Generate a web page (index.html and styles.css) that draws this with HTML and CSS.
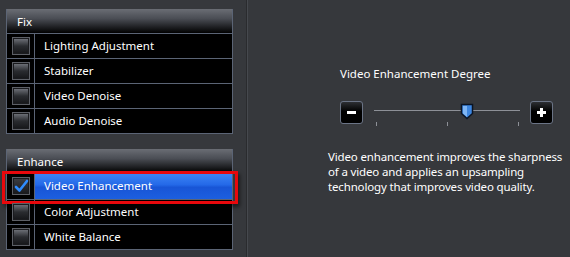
FILE: index.html
```html
<!DOCTYPE html>
<html lang="en">
<head>
    <meta charset="UTF-8">
    <title>Video Enhancement</title>
    <link rel="stylesheet" href="styles.css">
</head>
<body>
<div class="app">
    <!-- Danh sach hieu chinh -->
    <div class="side">
        <div class="panel">
            <div class="panel-head">Fix</div>
            <div class="row"><span class="cell"><span class="box"></span></span><span class="label">Lighting Adjustment</span></div>
            <div class="row"><span class="cell"><span class="box"></span></span><span class="label">Stabilizer</span></div>
            <div class="row"><span class="cell"><span class="box"></span></span><span class="label">Video Denoise</span></div>
            <div class="row"><span class="cell"><span class="box"></span></span><span class="label">Audio Denoise</span></div>
        </div>

        <div class="panel">
            <div class="panel-head">Enhance</div>
            <div class="row selected">
                <span class="cell">
                    <span class="box checked">
                        <svg width="16" height="16" viewBox="0 0 16 16">
                            <path d="M3 9 L6.5 12.5 L14 3" fill="none" stroke="#2f8cff" stroke-width="2.6" stroke-linecap="round" stroke-linejoin="round"/>
                        </svg>
                    </span>
                </span>
                <span class="label">Video Enhancement</span>
            </div>
            <div class="row"><span class="cell"><span class="box"></span></span><span class="label">Color Adjustment</span></div>
            <div class="row"><span class="cell"><span class="box"></span></span><span class="label">White Balance</span></div>
        </div>
    </div>

    <!-- Cai dat muc do -->
    <div class="main">
        <div class="title">Video Enhancement Degree</div>
        <div class="slider-row">
            <button class="step minus"><span class="bar"></span></button>
            <div class="slider">
                <div class="track"></div>
                <div class="thumb">
                    <svg width="14" height="17" viewBox="0 0 14 17">
                        <path d="M1.5 1.5 H12.5 V10.5 L7 15.5 L1.5 10.5 Z" fill="#3d86e0" stroke="#0b1424" stroke-width="1.5"/>
                        <path d="M3 3 H7 V14 L3 10.5 Z" fill="#7fb6f5"/>
                    </svg>
                </div>
                <div class="ticks"><span></span><span></span><span></span></div>
            </div>
            <button class="step plus"><span class="bar"></span><span class="bar vertical"></span></button>
        </div>
        <p class="desc">Video enhancement improves the sharpness of a video and applies an upsampling technology that improves video quality.</p>
    </div>
</div>
</body>
</html>
```

FILE: styles.css
```css
body {
    margin: 0;
    background-color: #36383c;
    font-family: "Noto Sans", "Open Sans", sans-serif;
    font-size: 11.5px;
    color: #ffffff;
}

.app {
    display: flex;
    height: 257px;
}

.side {
    width: 240px;
    padding: 9px 0 0 6px;
    display: flex;
    flex-direction: column;
    gap: 15px;
}

.panel {
    width: 225px;
    border: 1px solid #5b6475;
    border-top: none;
    background-color: #000;
    position: relative;
}

.panel-head {
    height: 24px;
    line-height: 26px;
    padding-left: 10px;
    background: linear-gradient(#6a6d74, #4a4d54 40%, #000 100%);
    border-bottom: 1px solid #5b6475;
}

.row {
    display: flex;
    height: 24px;
    border-bottom: 1px solid #5b6475;
}

.row:last-child {
    border-bottom: none;
}

.cell {
    width: 27px;
    border-right: 1px solid #5b6475;
    display: flex;
    align-items: center;
    justify-content: center;
}

.box {
    width: 14px;
    height: 14px;
    border: 1px solid #1a1b1e;
    outline: 1px solid #5c5f66;
    background: linear-gradient(#6b6e75, #2a2c30 50%, #17181b);
    position: relative;
}

.box.checked {
    background: linear-gradient(#3a3c41, #1a1b1e);
}

.box svg {
    position: absolute;
    left: -1px;
    top: -1px;
}

.label {
    flex: 1;
    padding-left: 9px;
    line-height: 24px;
}

.row.selected {
    height: 26px;
    margin-top: -1px;
}

.row.selected .cell {
    background-color: #000;
}

.row.selected .label {
    background: linear-gradient(#3f86f5, #2469e8 45%, #1855d6 55%, #1c5fe0);
    line-height: 26px;
}

.row.selected::after {
    content: "";
    position: absolute;
    left: -5px;
    top: 22px;
    width: 230px;
    height: 27px;
    border: 3px solid #e8080c;
    box-shadow: 2px 3px 4px rgba(0, 0, 0, 0.5);
    pointer-events: none;
}

.main {
    flex: 1;
    border-left: 1px solid #2a2b2e;
    box-shadow: inset 1px 0 #46494e;
    padding: 66px 0 0 81px;
}

.title {
    margin-left: 12px;
    line-height: 16px;
}

.slider-row {
    display: flex;
    align-items: flex-start;
    margin: 19px 0 0 12px;
}

.step {
    width: 23px;
    height: 23px;
    padding: 0;
    border: 1px solid #6a7385;
    border-radius: 3px;
    background: linear-gradient(#2d2f33, #000 45%, #000);
    position: relative;
    flex: none;
}

.step .bar {
    position: absolute;
    left: 6px;
    top: 9px;
    width: 9px;
    height: 3px;
    background-color: #fff;
}

.step .bar.vertical {
    left: 9px;
    top: 6px;
    width: 3px;
    height: 9px;
}

.slider {
    width: 167px;
    height: 25px;
    position: relative;
}

.track {
    position: absolute;
    left: 11px;
    right: 10px;
    top: 9px;
    height: 1px;
    background-color: #8d9097;
}

.thumb {
    position: absolute;
    left: 97px;
    top: 2px;
}

.ticks {
    position: absolute;
    left: 13px;
    right: 11px;
    top: 21px;
    display: flex;
    justify-content: space-between;
}

.ticks span {
    width: 1px;
    height: 4px;
    background-color: #8d9097;
}

.desc {
    margin: 23px 0 0 0;
    width: 242px;
    letter-spacing: -0.15px;
    line-height: 15px;
}
```
